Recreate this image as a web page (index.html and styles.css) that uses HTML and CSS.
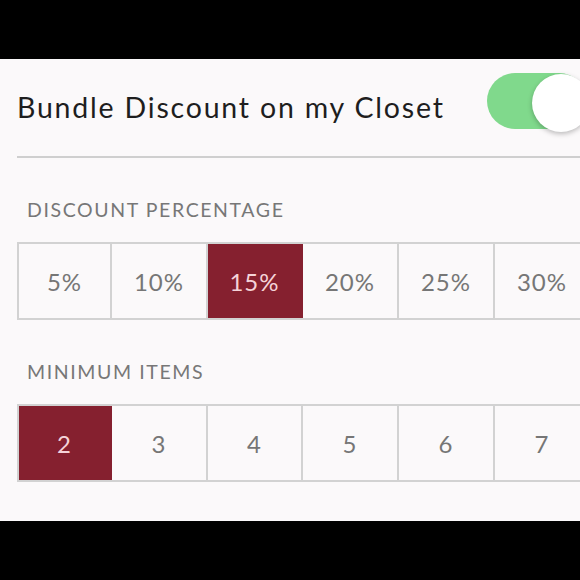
FILE: index.html
```html
<!DOCTYPE html>
<html>
<head>
<meta charset="utf-8">
<link rel="stylesheet" href="styles.css">
</head>
<body>
<div class="screen">
  <div class="bar"></div>
  <div class="content">
    <div class="header">
      <div class="title">Bundle Discount on my Closet</div>
      <div class="toggle"><div class="knob"></div></div>
    </div>
    <div class="divider"></div>
    <div class="label label-first">DISCOUNT PERCENTAGE</div>
    <div class="segments">
      <div class="cell">5%</div>
      <div class="cell">10%</div>
      <div class="cell selected">15%</div>
      <div class="cell">20%</div>
      <div class="cell">25%</div>
      <div class="cell">30%</div>
    </div>
    <div class="label label-second">MINIMUM ITEMS</div>
    <div class="segments">
      <div class="cell selected">2</div>
      <div class="cell">3</div>
      <div class="cell">4</div>
      <div class="cell">5</div>
      <div class="cell">6</div>
      <div class="cell">7</div>
    </div>
  </div>
  <div class="bar bar-bottom"></div>
</div>
</body>
</html>
```

FILE: styles.css
```css
html, body {
  margin: 0;
  padding: 0;
  background: #000;
}
.screen {
  width: 580px;
  height: 580px;
  overflow: hidden;
  display: flex;
  flex-direction: column;
  font-family: Lato, "Open Sans", sans-serif;
}
.bar {
  height: 59px;
  background: #000;
  flex-shrink: 0;
}
.bar-bottom {
  height: 59px;
}
.content {
  height: 462px;
  background: #fbf9fa;
  overflow: hidden;
  flex-shrink: 0;
}
.header {
  height: 97px;
  display: flex;
  align-items: center;
  justify-content: space-between;
  padding-left: 17px;
}
.title {
  font-size: 28.5px;
  color: #1e1e1e;
  letter-spacing: 1.8px;
  margin-top: -2px;
  white-space: nowrap;
}
.toggle {
  width: 100px;
  height: 56px;
  border-radius: 28px;
  background: #80d98c;
  display: flex;
  align-items: center;
  justify-content: flex-end;
  margin-right: -7px;
  flex-shrink: 0;
  margin-top: -14px;
}
.knob {
  width: 58px;
  height: 58px;
  border-radius: 50%;
  background: #fff;
  box-shadow: 0 2px 5px rgba(0,0,0,0.25);
  margin-right: -3px;
  margin-top: 4px;
}
.divider {
  margin-left: 17px;
  height: 2px;
  background: #cfcfcf;
}
.label {
  padding-left: 27px;
  font-size: 19.5px;
  color: #777;
  letter-spacing: 1.6px;
  line-height: 24px;
}
.label-first {
  margin-top: 40px;
  margin-bottom: 20px;
}
.label-second {
  margin-top: 40px;
  margin-bottom: 20px;
}
.segments {
  margin-left: 17px;
  display: grid;
  grid-template-columns: 93px 96px 95px 96px 96px 96px;
  height: 78px;
  border-top: 2px solid #d2d2d2;
  border-bottom: 2px solid #d2d2d2;
  border-left: 2px solid #d2d2d2;
  box-sizing: border-box;
  width: 600px;
}
.cell {
  display: flex;
  align-items: center;
  justify-content: center;
  font-size: 24px;
  letter-spacing: 1px;
  color: #767676;
  border-right: 2px solid #d2d2d2;
}
.cell.selected {
  background: #85202f;
  color: #f5d3d9;
  border-right-color: #85202f;
}
```
